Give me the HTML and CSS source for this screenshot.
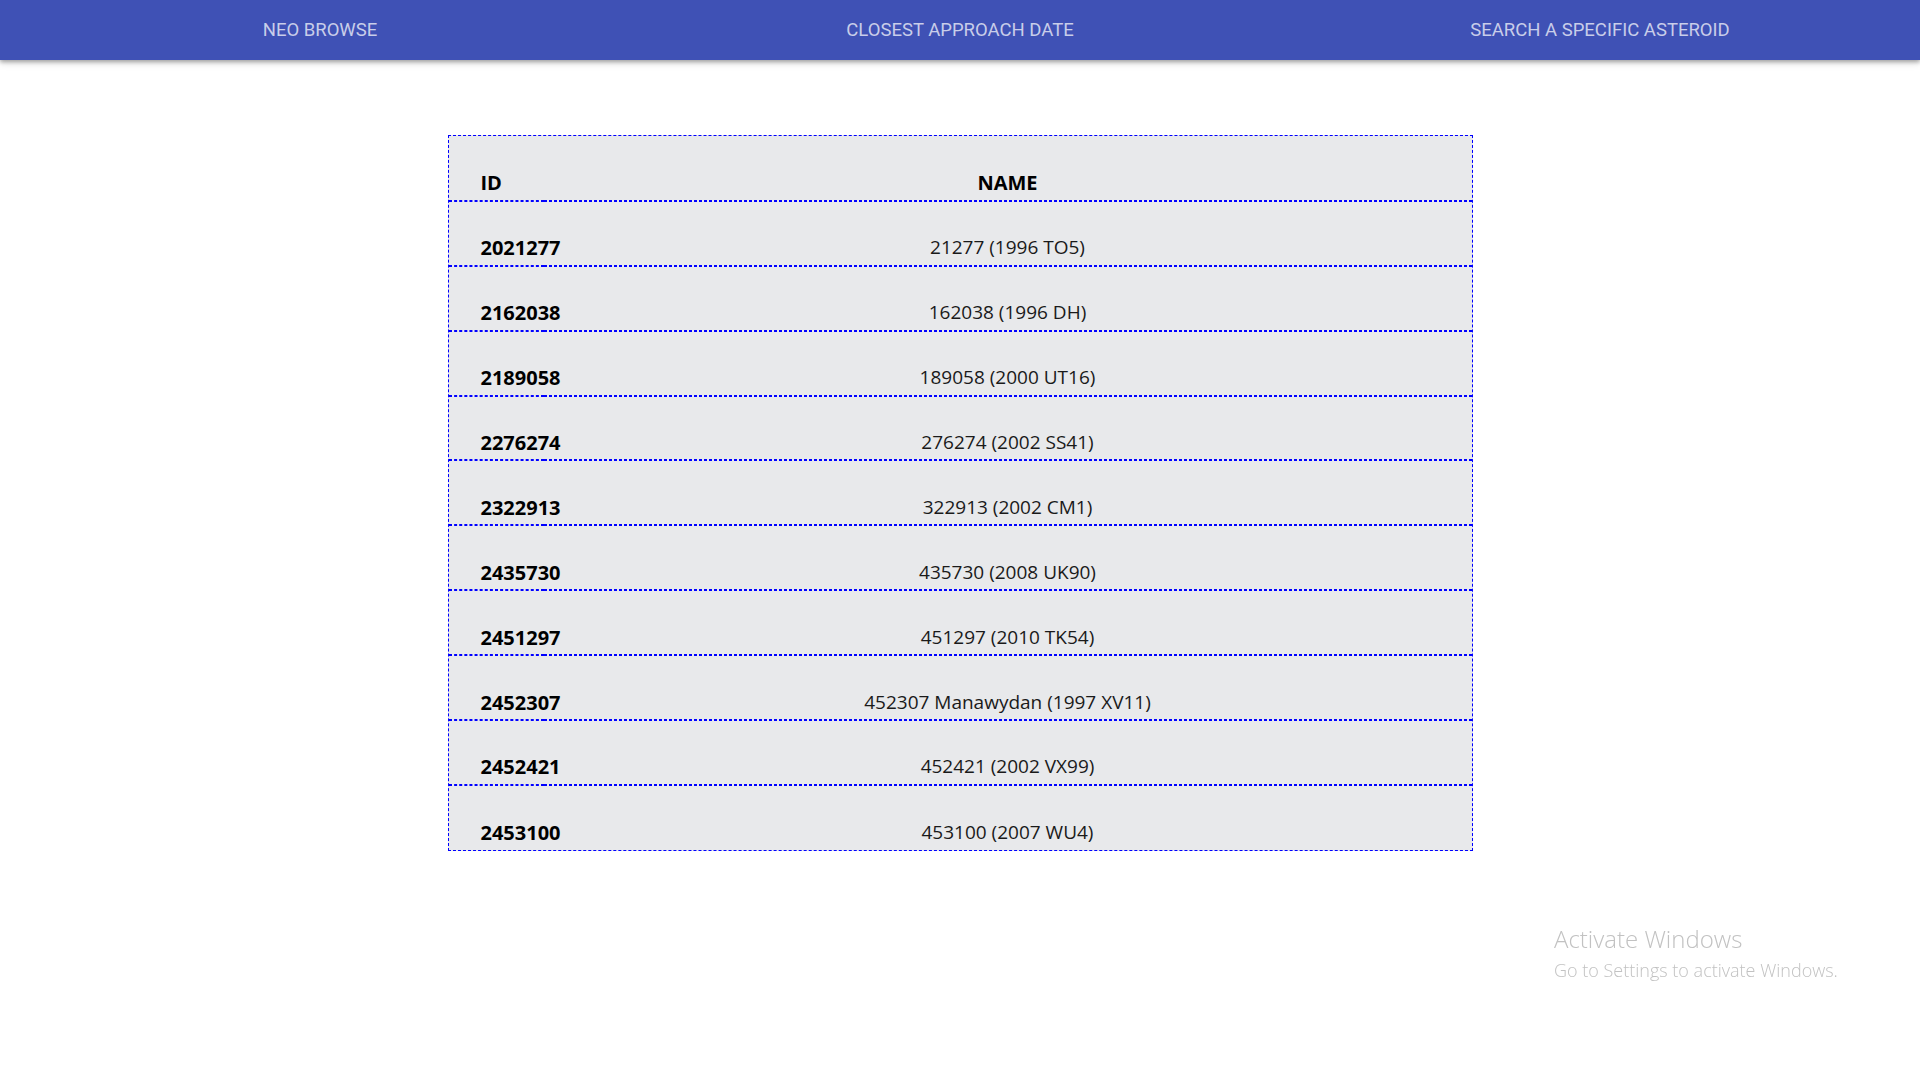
FILE: index.html
```
<!DOCTYPE html>
<html>
<head>
<meta charset="utf-8">
<link rel="stylesheet" href="styles.css">
</head>
<body>
<nav class="nav">
  <a class="nav-item">NEO BROWSE</a>
  <a class="nav-item">CLOSEST APPROACH DATE</a>
  <a class="nav-item">SEARCH A SPECIFIC ASTEROID</a>
</nav>
<main class="content">
  <table class="neo-table">
    <colgroup><col class="c-id"><col class="c-name"></colgroup>
    <thead>
      <tr><th class="col-id">ID</th><th class="col-name">NAME</th></tr>
    </thead>
    <tbody>
      <tr><td class="col-id">2021277</td><td class="col-name">21277 (1996 TO5)</td></tr>
      <tr><td class="col-id">2162038</td><td class="col-name">162038 (1996 DH)</td></tr>
      <tr><td class="col-id">2189058</td><td class="col-name">189058 (2000 UT16)</td></tr>
      <tr><td class="col-id">2276274</td><td class="col-name">276274 (2002 SS41)</td></tr>
      <tr><td class="col-id">2322913</td><td class="col-name">322913 (2002 CM1)</td></tr>
      <tr><td class="col-id">2435730</td><td class="col-name">435730 (2008 UK90)</td></tr>
      <tr><td class="col-id">2451297</td><td class="col-name">451297 (2010 TK54)</td></tr>
      <tr><td class="col-id">2452307</td><td class="col-name">452307 Manawydan (1997 XV11)</td></tr>
      <tr><td class="col-id">2452421</td><td class="col-name">452421 (2002 VX99)</td></tr>
      <tr><td class="col-id">2453100</td><td class="col-name">453100 (2007 WU4)</td></tr>
    </tbody>
  </table>
</main>
<div class="watermark">
  <div class="wm-title">Activate Windows</div>
  <div class="wm-sub">Go to Settings to activate Windows.</div>
</div>
</body>
</html>
```
FILE: styles.css
```
html, body {
  margin: 0;
  padding: 0;
  background: #ffffff;
}
body {
  font-family: "Open Sans", "Noto Sans", sans-serif;
}
.nav {
  display: grid;
  grid-template-columns: 1fr 1fr 1fr;
  height: 60px;
  background: #3f51b5;
  box-shadow: 0 2px 4px rgba(0,0,0,0.3), 0 3px 8px rgba(0,0,0,0.12);
  position: relative;
  z-index: 1;
}
.nav-item {
  display: flex;
  align-items: center;
  justify-content: center;
  font-family: Roboto, "Liberation Sans", sans-serif;
  font-size: 18.5px;
  color: rgba(255,255,255,0.72);
}
.content {
  display: flex;
  justify-content: center;
  padding-top: 75px;
}
.neo-table {
  width: 1025px;
  table-layout: fixed;
  border-collapse: separate;
  border-spacing: 0;
  background: #e8e9eb;
  border: 1px dashed #0000ff;
  font-size: 19px;
  color: #1a1a1a;
}
.c-id {
  width: 95px;
}
.neo-table tr {
  height: 64.9px;
}
.neo-table th,
.neo-table td {
  vertical-align: bottom;
  padding: 0 0 3.5px 0;
  line-height: 27px;
  white-space: nowrap;
  overflow: visible;
}
.neo-table th {
  border-bottom: 1px dashed #0000ff;
}
.neo-table td {
  border-top: 1px dashed #0000ff;
  border-bottom: 1px dashed #0000ff;
}
.neo-table tbody tr:last-child td {
  border-bottom: 0;
}
.col-id {
  padding-left: 32px !important;
  text-align: left;
  font-weight: 700;
  font-size: 20px;
  color: #000;
}
.col-name {
  text-align: center;
}
th.col-name {
  font-weight: 700;
  font-size: 20px;
  color: #000;
}
.watermark {
  position: fixed;
  left: 1554px;
  top: 923px;
  color: #c2c2c2;
  font-family: "Open Sans", "Noto Sans", sans-serif;
  font-weight: 300;
}
.wm-title {
  font-size: 24px;
  line-height: 32px;
}
.wm-sub {
  font-size: 18px;
  line-height: 24px;
  margin-top: 3px;
}
```
